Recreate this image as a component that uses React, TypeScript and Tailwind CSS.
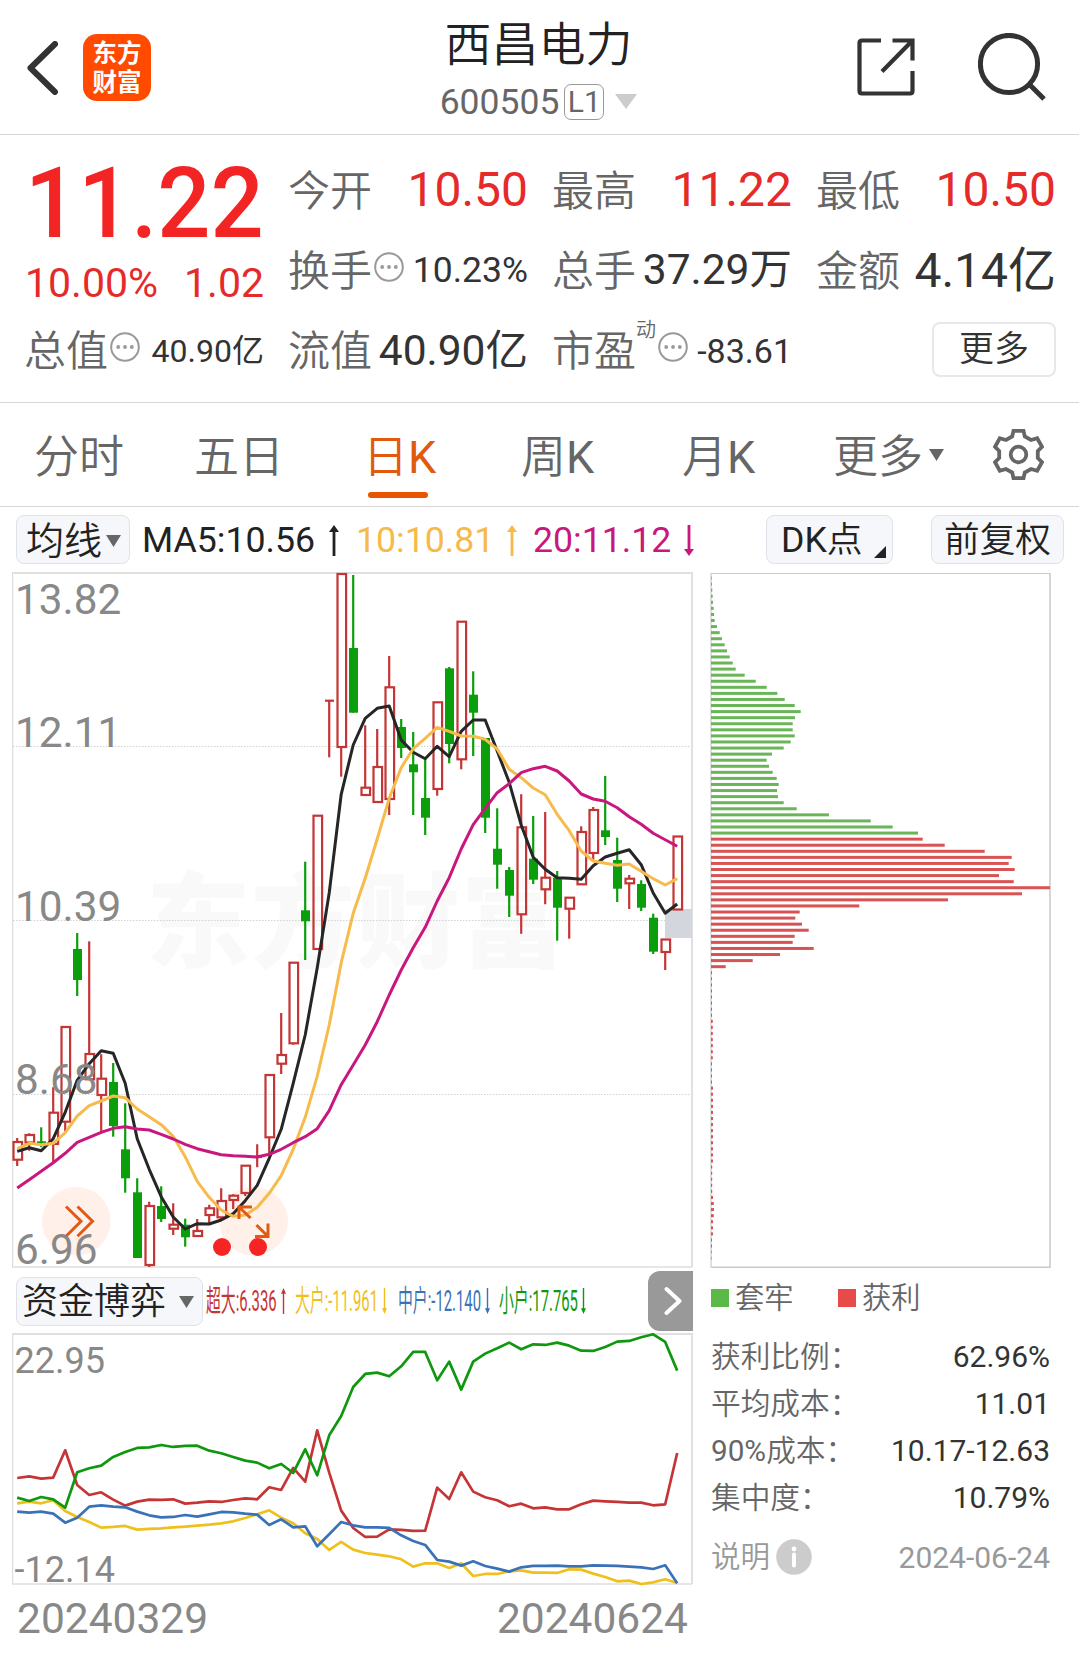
import type { ReactNode } from "react";

type Candle = [up: number, high: number, top: number, bottom: number, low: number];

// one entry per trading day, in plot units
const candles: Candle[] = [
  [1, 1138, 1142, 1159.7, 1166], [1, 1133.3, 1135, 1142.5, 1150.7], [0, 1127.3, 1141.3, 1143.3, 1147.3],
  [1, 1087.3, 1112.7, 1144, 1162.7], [1, 1027, 1027, 1121.7, 1131.7], [0, 933, 949, 980, 996],
  [1, 941.3, 1054, 1079.3, 1079.3], [1, 1054.3, 1078.7, 1095, 1132.7], [0, 1063, 1082, 1126, 1136.7],
  [0, 1103.3, 1149.3, 1178.3, 1192.7], [0, 1178.3, 1192.3, 1258, 1258], [1, 1201.7, 1206, 1265, 1267],
  [0, 1186.3, 1206, 1219, 1222], [1, 1203.3, 1224.7, 1228.7, 1235], [0, 1218.7, 1224.7, 1237.3, 1246.7],
  [1, 1219, 1231, 1236, 1236], [1, 1204.7, 1208.3, 1215, 1223.3], [1, 1188.3, 1201, 1217.3, 1220],
  [1, 1194.3, 1195.7, 1200, 1209], [1, 1165.7, 1165.7, 1193, 1196], [1, 1144.3, 1157, 1157, 1167.3],
  [1, 1075, 1075, 1137.3, 1156], [1, 1013, 1055, 1063.7, 1074], [1, 962.7, 962.7, 1043.3, 1044.7],
  [0, 861.7, 910.3, 921.3, 960], [1, 815.7, 815.7, 949, 949], [1, 700.7, 700.7, 700.7, 757.3],
  [1, 574, 574, 747, 776.7], [0, 575, 648, 712.7, 712.7], [1, 725.3, 787.7, 795, 795],
  [1, 729, 767, 802, 802], [1, 656, 687.3, 799, 815], [0, 719, 727, 748, 758],
  [0, 732, 764.3, 772.3, 815], [0, 758.3, 798, 817.7, 835], [1, 702.3, 702.3, 789, 795.7],
  [0, 667, 668.3, 744, 763.3], [1, 621.7, 621.7, 759.3, 769.3], [0, 671.3, 694.7, 712.7, 756],
  [0, 738, 738, 817.7, 833], [0, 808.3, 848.7, 864.7, 888.7], [0, 867, 870, 895.7, 917],
  [1, 794.3, 827.3, 914.3, 933.7], [0, 816, 858.7, 879.7, 884], [1, 812, 877.7, 889.3, 904.3],
  [0, 871, 877.7, 907.7, 940.7], [1, 897.7, 897.7, 908.7, 938.7], [1, 826.3, 832, 884.3, 884.3],
  [1, 807, 810, 853, 860], [0, 776, 830.3, 837, 845], [0, 837.7, 860, 888.7, 902],
  [1, 875, 878.7, 883.3, 909], [0, 880.3, 884, 907.7, 911], [0, 913.7, 917.7, 951.7, 954],
  [1, 939.5, 939.5, 952, 970], [1, 836.5, 836.5, 909.5, 909.5],
];

const ma5 = [
  1151.3, 1147.7, 1150.7, 1138.7, 1112.3, 1080.3, 1063.7, 1050.7, 1053.3, 1083.3, 1138.7, 1169.3, 1196.7, 1217,
  1229, 1223.7, 1224, 1220, 1213.7, 1200.7, 1185.3, 1158.3, 1129.3, 1083.3, 1035, 968, 893, 794.3, 745, 718.3,
  708.3, 706, 740, 752.3, 758.7, 746.3, 756.7, 731.3, 720, 720, 751, 782.3, 825, 857.3, 869.3, 877.7, 878.3,
  879.3, 865.7, 857, 853.3, 849.7, 864.7, 893, 913.3, 904,
];

const ma10 = [
  1148.7, 1143.3, 1144.7, 1143.3, 1132.7, 1116, 1105.7, 1101, 1096, 1097.7, 1109, 1116.7, 1124.7, 1136.3, 1156.7,
  1181.3, 1197.3, 1210, 1216.3, 1215, 1207.3, 1193.3, 1175.7, 1149.3, 1117.3, 1076.3, 1025, 962.7, 913.3, 878.3,
  839, 798.3, 767.7, 748.7, 738.3, 727.3, 731.3, 736, 736.3, 739.3, 749, 769.3, 777.7, 788, 794.7, 814.3, 830.7,
  851, 861, 863.3, 865.3, 864, 871.3, 878.7, 885, 878.7,
];

const ma20 = [
  1188, 1179.7, 1171.3, 1162.7, 1153.3, 1142.3, 1137.3, 1132.3, 1128.3, 1126.7, 1129, 1130, 1134.3, 1139, 1144.3,
  1148.7, 1151.7, 1154.7, 1155.7, 1156.3, 1157, 1154.3, 1149.3, 1142.7, 1136.7, 1128.7, 1110.7, 1084.7, 1065,
  1045, 1021.7, 995, 970, 947.7, 927.3, 901, 877.7, 849, 824.7, 808.3, 792.7, 783.7, 772.7, 768.7, 766.3, 771,
  781, 794, 799, 801.3, 807.7, 816.7, 824.3, 833.3, 839.7, 846.3,
];

// fund flow series, three units to a pixel
const superLarge = [
  653, 648, 655, 652, 570, 674, 704, 696, 718, 736, 724, 718, 719, 717, 730, 727, 723, 725, 719, 714, 717, 681,
  689, 623, 664, 510, 637, 751, 803, 830, 829, 807, 809, 812, 811, 682, 716, 636, 694, 711, 720, 738, 730, 744,
  741, 747, 747, 732, 721, 723, 725, 727, 727, 735, 732, 578,
];
const large = [
  729, 724, 729, 720, 752, 770, 785, 802, 800, 797, 808, 806, 804, 801, 799, 796, 793, 789, 783, 773, 762, 750,
  772, 789, 819, 836, 869, 845, 868, 878, 883, 888, 897, 919, 909, 909, 923, 909, 947, 941, 941, 933, 930, 937,
  937, 938, 927, 928, 940, 950, 963, 961, 971, 966, 957, 968,
];
const medium = [
  754, 757, 754, 760, 787, 772, 739, 735, 739, 741, 754, 765, 771, 770, 764, 769, 762, 755, 756, 760, 763, 794,
  777, 801, 798, 858, 822, 785, 795, 801, 801, 803, 825, 842, 854, 899, 904, 916, 903, 917, 925, 934, 921, 917,
  917, 916, 918, 918, 915, 916, 917, 919, 921, 926, 915, 969,
];
const small = [
  712, 722, 710, 717, 742, 636, 624, 616, 590, 575, 563, 561, 554, 560, 557, 556, 571, 579, 590, 601, 607, 624,
  611, 638, 567, 645, 525, 467, 380, 341, 337, 348, 318, 275, 275, 360, 304, 388, 304, 280, 264, 247, 267, 252,
  254, 247, 256, 271, 272, 260, 244, 242, 231, 222, 245, 331,
];

const trapped = [
  0.7, 1, 1.3, 1.7, 2, 2.7, 3, 3.7, 6, 8.7, 11, 13.7, 16, 18.7, 21.7, 24.7, 33.7, 44.7, 55.7, 66.3, 73.7, 83.7,
  89.7, 84, 81.7, 81.7, 83.7, 79.7, 72.7, 61, 55.7, 58, 61.7, 65.7, 67.7, 66, 67, 72.7, 85.7, 118, 159.7, 181.7,
  207,
];
const profit = [
  211.7, 233.7, 273.7, 300.7, 297.7, 303.7, 288, 302.7, 339, 311, 237, 148.3, 88.7, 84.3, 91, 97.7, 83.7, 81.7,
  102.7, 69, 41.7, 14.7, 1, 1, 1, 1, 1, 1, 1, 1, 1.8, 1.8, 1.8, 1.8, 1.8, 1.8, 1.8, 1, 1, 1, 1, 2, 2, 2, 2, 2, 2,
  2, 2, 2, 2, 2, 2, 2, 1.2, 1.2, 1.2, 1.2, 1.2, 2, 2.8, 3, 2.8, 2, 2, 2, 1, 1, 0.6, 0.5,
];

const dayX = (i: number) => 17.2 + i * 12;
const toPoints = (ys: number[]) => ys.map((y, i) => `${dayX(i)},${y}`).join(" ");
const flowPoints = (ys: number[]) => toPoints(ys.map((v) => 1260.3 + v / 3));

function Arrow({ up, className }: { up?: boolean; className: string }) {
  return (
    <svg viewBox="0 0 10 31" preserveAspectRatio="none" fill="currentColor" className={className}>
      <path d={up ? "M5 0 10 7H6.4V31H3.6V7H0Z" : "M5 31 10 24H6.4V0H3.6V24H0Z"} />
    </svg>
  );
}

function Triangle({ className }: { className: string }) {
  return (
    <svg viewBox="0 0 15 12" preserveAspectRatio="none" fill="currentColor" className={className}>
      <path d="M0 0H15L7.5 12Z" />
    </svg>
  );
}

function Dots() {
  return (
    <svg viewBox="0 0 30 30" className="-mt-[7px] ml-[2px] h-[30px] w-[30px] shrink-0">
      <circle cx="15" cy="15" r="13.8" fill="none" stroke="#999" strokeWidth="2" />
      <circle cx="8.2" cy="15" r="1.9" fill="#999" />
      <circle cx="15" cy="15" r="1.9" fill="#999" />
      <circle cx="21.8" cy="15" r="1.9" fill="#999" />
    </svg>
  );
}

function Header() {
  return (
    <header className="flex h-[135px] items-start justify-between border-b border-[#d6d6d6]">
      <div className="flex w-[360px] pt-[33px] pl-[26px]">
        <svg viewBox="0 0 32 54" className="mt-[7.5px] h-[54px] w-8" fill="none" stroke="#333" strokeWidth="6" strokeLinecap="round" strokeLinejoin="round">
          <path d="M29 3 4.5 27 29 51" />
        </svg>
        <div className="mt-px ml-[25px] flex h-[67px] w-[68px] flex-col items-center justify-center rounded-[14px] bg-[#ff4a00] text-[24.5px] leading-[29px] font-bold text-white">
          <span>东方</span>
          <span>财富</span>
        </div>
      </div>
      <div className="flex flex-col items-center pt-[21px]">
        <h1 className="-ml-[2px] text-[47px] leading-none font-[350] text-[#222]">西昌电力</h1>
        <div className="mt-[15px] mr-[2px] flex items-center">
          <span className="pt-0.5 text-[35.5px] leading-none text-[#666]">600505</span>
          <span className="ml-[5px] flex h-9 w-10 items-center justify-center rounded-[7px] border-[1.5px] border-[#999] text-[30px] leading-none text-[#666]">
            L1
          </span>
          <Triangle className="ml-[11px] h-[15px] w-[22px] text-[#ccc]" />
        </div>
      </div>
      <div className="flex w-[360px] justify-end gap-[63px] pt-[33px] pr-[33px]">
        <svg viewBox="0 0 58 58" className="mt-[5px] h-[58px] w-[58px]" fill="none" stroke="#333" strokeWidth="4.2">
          <path d="M24 2.5H5Q2.5 2.5 2.5 5V53Q2.5 55.5 5 55.5H53Q55.5 55.5 55.5 53V33" />
          <path d="M35.5 2.5H55.5V22.5M55 3 25 33.5" />
        </svg>
        <svg viewBox="0 0 68 68" className="h-[68px] w-[68px]" fill="none" stroke="#333" strokeWidth="5">
          <circle cx="31" cy="31" r="28.6" />
          <path d="M51 51 66 66" />
        </svg>
      </div>
    </header>
  );
}

function Stat({ label, children, dots, sup }: { label: string; children: ReactNode; dots?: boolean; sup?: string }) {
  return (
    <div className="flex h-20 items-center justify-between">
      <div className="-ml-px flex items-center">
        <span className="pt-[3px] text-[42px] leading-none font-[350] text-[#666]">{label}</span>
        {sup && <span className="-mt-[40px] text-[20px] leading-none font-[350] text-[#666]">{sup}</span>}
        {dots && <Dots />}
      </div>
      {children}
    </div>
  );
}

function Quote() {
  return (
    <section className="grid h-[268px] grid-cols-4 content-start gap-x-[25px] border-b border-[#d6d6d6] pt-[15px] pr-[23px] pl-[25px] leading-none text-[#333]">
      <div className="row-span-2 flex flex-col justify-start pt-[9px] text-[#e62a2a]">
        <span className="origin-left scale-x-[0.945] text-[99px] leading-[88px] font-medium text-[#f32424]">11.22</span>
        <div className="mt-4 flex justify-between text-[41px]">
          <span>10.00%</span>
          <span>1.02</span>
        </div>
      </div>
      <Stat label="今开">
        <span className="text-[48px] text-[#e62a2a]">10.50</span>
      </Stat>
      <Stat label="最高">
        <span className="text-[48px] text-[#e62a2a]">11.22</span>
      </Stat>
      <Stat label="最低">
        <span className="text-[48px] text-[#e62a2a]">10.50</span>
      </Stat>
      <Stat label="换手" dots>
        <span className="pt-0.5 text-[35.5px]">10.23%</span>
      </Stat>
      <Stat label="总手">
        <span className="text-[42.5px]">37.29万</span>
      </Stat>
      <Stat label="金额">
        <span className="pt-0.5 text-[48px]">4.14亿</span>
      </Stat>
      <Stat label="总值" dots>
        <span className="pt-0.5 text-[32px]">40.90亿</span>
      </Stat>
      <Stat label="流值">
        <span className="pt-0.5 text-[42.5px]">40.90亿</span>
      </Stat>
      <Stat label="市盈" sup="动" dots>
        <span className="pt-0.5 text-[34px]">-83.61</span>
      </Stat>
      <div className="-mt-px flex h-20 items-center justify-end">
        <button className="h-[55px] w-[124px] rounded-lg border-2 border-[#e8e8e8] text-[35px] leading-none font-[350]">更多</button>
      </div>
    </section>
  );
}

function Tabs() {
  return (
    <nav className="flex h-[104px] items-start border-b border-[#d6d6d6] pt-8 pl-[34px] text-[45px] leading-none font-[350] text-[#666]">
      <span className="w-[160px]">分时</span>
      <span className="w-[169px]">五日</span>
      <span className="flex w-[158px] flex-col text-[#e05a10]">
        <span>
          日<b className="font-normal">K</b>
        </span>
        <i className="mt-3 ml-[5px] h-[6px] w-[60px] rounded-full bg-[#e85500]" />
      </span>
      <span className="w-[161px]">
        周<b className="font-normal">K</b>
      </span>
      <span className="w-[151px]">
        月<b className="font-normal">K</b>
      </span>
      <span>更多</span>
      <Triangle className="mt-[14px] ml-[6px] h-3 w-[15px]" />
      <svg viewBox="0 0 51 51" className="-mt-1.5 ml-[49px] h-[51px] w-[51px]" fill="none" stroke="#666" strokeWidth="3.8">
        <path d="M20.5 1.9H30.5L31.8 7.5 38 11 44.2 9.2 49 17.8 44.8 22V29L49 33.2 44.2 41.8 38 40 31.8 43.5 30.5 49.1H20.5L19.2 43.5 13 40 6.8 41.8 2 33.2 6.2 29V22L2 17.8 6.8 9.2 13 11 19.2 7.5Z" />
        <circle cx="25.5" cy="25.5" r="7.8" />
      </svg>
    </nav>
  );
}

function Indicators() {
  const chip = "flex h-[49px] items-center rounded-lg border border-[#dfe2e8] bg-[#f6f7fa] pt-0.5 font-[350] text-[#222]";
  return (
    <div className="flex h-[65px] items-start pt-2 pl-4 text-[35.7px] leading-none">
      <div className={`${chip} w-[114px] pl-[9px] text-[38px]`}>
        均线
        <Triangle className="ml-1 h-3 w-[15px] text-[#666]" />
      </div>
      <div className="flex h-[49px] w-[636px] items-center pt-0.5 pl-3">
        <span className="w-[187px] text-[#222]">MA5:10.56</span>
        <Arrow up className="h-[31px] w-[10px] text-[#222]" />
        <span className="ml-[17px] w-[151px] text-[#f7b94a]">10:10.81</span>
        <Arrow up className="h-[31px] w-[10px] text-[#f7b94a]" />
        <span className="ml-4 w-[151px] text-[#c9177e]">20:11.12</span>
        <Arrow className="h-[31px] w-[10px] text-[#c9177e]" />
      </div>
      <div className={`${chip} relative w-[127px] pl-[14px]`}>
        <b className="font-normal">DK</b>点
        <svg viewBox="0 0 12 12" className="absolute right-[6px] bottom-[5px] h-3 w-3">
          <path d="M12 0V12H0Z" fill="#222" />
        </svg>
      </div>
      <div className={`${chip} ml-[38px] w-[133px] justify-center`}>前复权</div>
    </div>
  );
}

function CandleChart() {
  return (
    <svg viewBox="12 572 682 696" className="h-[696px] w-[682px]">
      <text x="146" y="960" fontSize="104" fontWeight="900" letterSpacing="1" fill="#f9f9f9">
        东方财富
      </text>
      <path d="M12.5 573V1267M12 1267H692" fill="none" stroke="#dedede" strokeWidth="1.5" />
      <path d="M12 573H692V1267" fill="none" stroke="#e0e0e0" strokeWidth="2" />
      <path d="M13 746.5H691M13 920.5H691M13 1094.5H691" stroke="#d2d2d2" strokeDasharray="1.5 1.5" />
      <circle cx="76.3" cy="1221.3" r="34.3" fill="#fff0e9" />
      <circle cx="253.7" cy="1221.3" r="34.3" fill="#fff0e9" />
      <rect x="665" y="909" width="27" height="29" fill="#d3d7dd" />
      {candles.map(([up, high, top, bottom, low], i) => {
        const x = dayX(i);
        if (!up) {
          return (
            <g key={i} fill="#0a9f0a">
              <rect x={x - 1.1} y={high} width="2.2" height={low - high} />
              <rect x={x - 4.2} y={top} width="9" height={bottom - top} />
            </g>
          );
        }
        return (
          <g key={i} fill="none" stroke="#c53535" strokeWidth="2.2">
            <path d={`M${x} ${high}V${top}M${x} ${bottom}V${low}`} />
            {bottom - top < 1 ? (
              <path d={`M${x - 4.2} ${top}h9`} />
            ) : (
              <rect x={x - 3.7} y={top} width="8.6" height={bottom - top} />
            )}
          </g>
        );
      })}
      <g fill="none" strokeWidth="3" strokeLinejoin="round">
        <polyline points={toPoints(ma5)} stroke="#262626" />
        <polyline points={toPoints(ma10)} stroke="#f7bb4c" />
        <polyline points={toPoints(ma20)} stroke="#c9177e" />
      </g>
      <g fill="none" stroke="#e05a14" strokeWidth="3">
        <path d="M66 1206.5 81 1221.3 66 1236.3M77.5 1206.5 92.5 1221.3 77.5 1236.3" />
        <path d="M239 1219V1207H252M239 1207 250.5 1218M255 1236.5H268V1223.5M268 1236.5 256.5 1225" />
      </g>
      <circle cx="222" cy="1247" r="9" fill="#f62422" />
      <circle cx="258" cy="1247" r="9" fill="#f62422" />
      <g fontSize="42.3" fill="#888">
        <text x="15" y="614.3">13.82</text>
        <text x="15" y="747">12.11</text>
        <text x="15" y="921">10.39</text>
        <text x="15" y="1094">8.68</text>
        <text x="15" y="1264">6.96</text>
      </g>
    </svg>
  );
}

function ChipChart() {
  return (
    <svg viewBox="709 572 344 697" className="h-[697px] w-[344px]">
      <path d="M711 1267.5V573.5H1050" fill="none" stroke="#ccc" strokeWidth="1.2" />
      <path d="M1050 573V1267.3H711" fill="none" stroke="#ccc" strokeWidth="1.6" />
      {[...trapped, ...profit].map((w, i) => (
        <rect key={i} x="711" y={576.5 + i * 6.073} width={w} height="3" fill={i < trapped.length ? "#69b557" : "#d85353"} />
      ))}
    </svg>
  );
}

function Legend({ text, up, className }: { text: string; up?: boolean; className: string }) {
  return (
    <div className={`flex h-12 shrink-0 items-center justify-between ${className}`}>
      <span className="w-0 origin-left scale-x-[0.495] text-[30px] leading-none whitespace-nowrap">{text}</span>
      <Arrow up={up} className="h-[26px] w-[5px]" />
    </div>
  );
}

function FundFlow() {
  return (
    <div className="w-[682px]">
      <div className="flex h-[63px] items-start pt-1">
        <div className="mt-1 ml-1 flex h-[49px] w-[187px] shrink-0 items-center rounded-lg border border-[#dfe2e8] bg-[#f6f7fa] pl-[5px] text-[36px] leading-none font-[350] text-[#222]">
          资金博弈
          <Triangle className="ml-[13px] h-3 w-[15px] text-[#666]" />
        </div>
        <div className="mt-1 flex w-[445px] pl-[3px]">
          <Legend text="超大:6.336" up className="w-[80px] text-[#c53535]" />
          <Legend text="大户:-11.961" className="ml-[9px] w-[92px] text-[#efbf1e]" />
          <Legend text="中户:-12.140" className="ml-[11px] w-[92px] text-[#3a72b8]" />
          <Legend text="小户:17.765" className="ml-[9px] w-[87px] text-[#0f980f]" />
        </div>
        <div className="-mt-[2px] flex h-[60px] w-[45px] shrink-0 items-center justify-center rounded-l-[12px] bg-[#999]">
          <svg viewBox="0 0 18 30" className="ml-1 h-[30px] w-[18px]" fill="none" stroke="#fff" strokeWidth="4" strokeLinecap="round" strokeLinejoin="round">
            <path d="M2.5 3 15.5 15 2.5 27" />
          </svg>
        </div>
      </div>
      <svg viewBox="12 1332 682 254" className="h-[254px] w-[682px]">
        <path d="M12.5 1334V1584M12 1584H692" fill="none" stroke="#dedede" strokeWidth="1.5" />
        <path d="M12 1334H692V1584" fill="none" stroke="#e0e0e0" strokeWidth="2" />
        <g fontSize="36" fill="#888">
          <text x="14.5" y="1372.7">22.95</text>
          <text x="14.5" y="1581.7">-12.14</text>
        </g>
        <g fill="none" strokeWidth="2.7" strokeLinejoin="round">
          <polyline points={flowPoints(superLarge)} stroke="#c53535" />
          <polyline points={flowPoints(large)} stroke="#efc01c" />
          <polyline points={flowPoints(medium)} stroke="#3a72b8" />
          <polyline points={flowPoints(small)} stroke="#0f980f" />
        </g>
      </svg>
      <div className="flex justify-between pt-3 pr-[6px] pl-[5px] text-[42.5px] leading-none text-[#888]">
        <span>20240329</span>
        <span>20240624</span>
      </div>
    </div>
  );
}

const costs = [
  ["", "获利比例：", "62.96%"],
  ["", "平均成本：", "11.01"],
  ["90%", "成本：", "10.17-12.63"],
  ["", "集中度：", "10.79%"],
];

function CostPanel() {
  return (
    <div className="w-[339px] pt-[15px] text-[30px] leading-none">
      <div className="flex h-[29px] items-center text-[29.3px] font-[350] text-[#666]">
        <i className="-mt-px h-[18px] w-[18px] bg-[#5bb947]" />
        <span className="ml-[6px] w-[103px]">套牢</span>
        <i className="-mt-px h-[18px] w-[18px] bg-[#e84a4a]" />
        <span className="ml-[6px]">获利</span>
      </div>
      <dl className="mt-5">
        {costs.map(([prefix, label, value]) => (
          <div key={label} className="flex h-[47px] items-center justify-between">
            <dt className="text-[29.7px] font-[350] text-[#666]">
              <span className="font-normal">{prefix}</span>
              {label}
            </dt>
            <dd className="text-[#333]">{value}</dd>
          </div>
        ))}
      </dl>
      <div className="mt-[13px] flex h-[46px] items-center text-[#999]">
        <span className="pt-px text-[29.5px] font-[350]">说明</span>
        <svg viewBox="0 0 36 36" className="ml-[6px] h-9 w-9">
          <circle cx="18" cy="18" r="17.8" fill="#ccc" />
          <circle cx="18" cy="10" r="2.4" fill="#fff" />
          <path d="M18 15.5V26.5" stroke="#fff" strokeWidth="4" strokeLinecap="round" />
        </svg>
        <span className="ml-auto pt-0.5">2024-06-24</span>
      </div>
    </div>
  );
}

export default function App() {
  return (
    <div className="h-[1654px] w-[1079px] overflow-hidden bg-white font-[Roboto,'Noto_Sans_CJK_SC',sans-serif]">
      <Header />
      <Quote />
      <Tabs />
      <Indicators />
      <div className="flex gap-[15px] pl-3">
        <CandleChart />
        <ChipChart />
      </div>
      <div className="flex gap-[17px] pl-3">
        <FundFlow />
        <CostPanel />
      </div>
    </div>
  );
}
